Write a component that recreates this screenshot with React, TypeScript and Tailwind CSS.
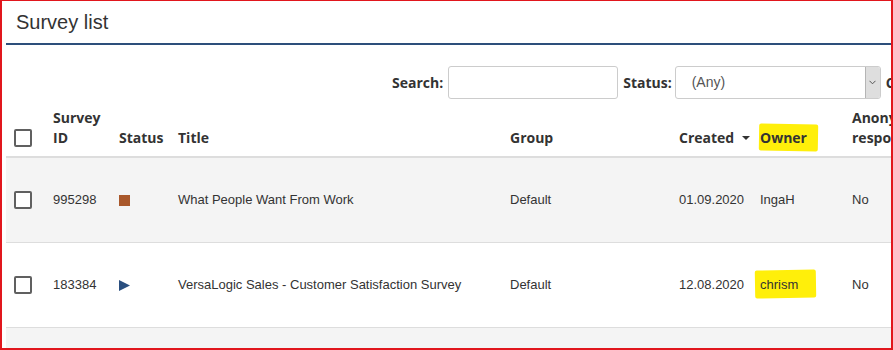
import React from 'react';

type Survey = {
    id: string;
    status: 'stopped' | 'active';
    title: string;
    group: string;
    created: string;
    owner: string;
    anonymized: string;
    marked?: boolean;
};

const surveys: Survey[] = [
    { id: '995298', status: 'stopped', title: 'What People Want From Work', group: 'Default', created: '01.09.2020', owner: 'IngaH', anonymized: 'No' },
    { id: '183384', status: 'active', title: 'VersaLogic Sales - Customer Satisfaction Survey', group: 'Default', created: '12.08.2020', owner: 'chrism', anonymized: 'No', marked: true },
];

const cols = 'grid grid-cols-[47px_66px_59px_332px_169px_81px_92px_160px]';

function Checkbox() {
    return <span className="block w-[18px] h-[18px] border-2 border-[#606060] rounded-[2px] bg-white" />;
}

function Marker({ children, wide }: { children: React.ReactNode; wide?: boolean }) {
    return (
        <span className="relative inline-block">
            <span
                className={
                    wide
                        ? 'absolute -top-[5px] -bottom-[3px] -left-[5px] -right-[18px] bg-[#ffef0a] rounded-[2px] -rotate-1'
                        : 'absolute -top-[4px] -bottom-[3px] -left-[1px] -right-[11px] bg-[#ffef0a] rounded-[2px] rotate-1'
                }
            />
            <span className="relative">{children}</span>
        </span>
    );
}

function StatusIcon({ status }: { status: Survey['status'] }) {
    if (status === 'stopped') {
        return <span className="block w-[11px] h-[11px] bg-[#a9582b]" />;
    }
    return (
        <svg width="11" height="11" viewBox="0 0 11 11">
            <path d="M0 0 L11 5.5 L0 11 Z" fill="#2a4f7f" />
        </svg>
    );
}

export default function App() {
    return (
        <div className="w-[893px] h-[350px] overflow-hidden bg-white border-[#e1161d] border-t border-l-2 border-r-2 border-b-2 text-[#333]">
            <div className="ml-[4px]">
                <div className="h-[44px] flex items-center pl-[10px] border-b-2 border-[#2d4f7b]">
                    <h1 className="text-[20px] text-[#333]" style={{ fontFamily: '"Liberation Sans", Arial, sans-serif' }}>
                        Survey list
                    </h1>
                </div>

                <div
                    className="flex items-center mt-[21px] pl-[386px] whitespace-nowrap text-[14px] font-bold"
                    style={{ fontFamily: '"Open Sans", sans-serif' }}
                >
                    <label className="shrink-0 mr-[5px]">Search:</label>
                    <input className="shrink-0 w-[170px] h-[33px] border border-[#ccc] rounded-[3px] bg-white" />
                    <label className="shrink-0 ml-[5px] mr-[3px]">Status:</label>
                    <div className="shrink-0 w-[206px] h-[33px] border border-[#ccc] rounded-[3px] flex items-stretch overflow-hidden font-normal">
                        <span
                            className="flex-1 flex items-center pl-[16px] text-[#555] text-[14px]"
                            style={{ fontFamily: '"Liberation Sans", Arial, sans-serif' }}
                        >
                            (Any)
                        </span>
                        <span className="w-[15px] bg-[#dedede] border-l border-[#b5b5b5] flex items-center justify-center">
                            <svg width="7" height="5" viewBox="0 0 7 5">
                                <path d="M0.5 0.8 L3.5 3.8 L6.5 0.8" fill="none" stroke="#555" strokeWidth="1" />
                            </svg>
                        </span>
                    </div>
                    <span className="shrink-0 ml-[5px]">Columns</span>
                </div>

                <div
                    className={`${cols} h-[59px] items-end pb-[8px] border-b-2 border-[#ddd] text-[14px] font-bold leading-[20px] whitespace-nowrap`}
                    style={{ fontFamily: '"Open Sans", sans-serif' }}
                >
                    <div className="h-[20px] flex items-center pl-[8px]">
                        <Checkbox />
                    </div>
                    <div>
                        Survey
                        <br />
                        ID
                    </div>
                    <div>Status</div>
                    <div>Title</div>
                    <div>Group</div>
                    <div className="flex items-center">
                        Created
                        <svg className="ml-[8px]" width="8" height="4" viewBox="0 0 8 4">
                            <path d="M0 0 L8 0 L4 4 Z" fill="#333" />
                        </svg>
                    </div>
                    <div>
                        <Marker>Owner</Marker>
                    </div>
                    <div>
                        Anonymized
                        <br />
                        responses
                    </div>
                </div>

                <div className="text-[13px] leading-[20px]" style={{ fontFamily: '"Liberation Sans", Arial, sans-serif' }}>
                    {surveys.map((s, i) => (
                        <div
                            key={s.id}
                            className={`${cols} h-[85px] items-center border-b border-[#ddd] whitespace-nowrap ${i % 2 === 0 ? 'bg-[#f4f4f4]' : 'bg-white'}`}
                        >
                            <div className="pl-[8px]">
                                <Checkbox />
                            </div>
                            <div>{s.id}</div>
                            <div className="flex items-center">
                                <StatusIcon status={s.status} />
                            </div>
                            <div>{s.title}</div>
                            <div>{s.group}</div>
                            <div>{s.created}</div>
                            <div>{s.marked ? <Marker wide>{s.owner}</Marker> : s.owner}</div>
                            <div>{s.anonymized}</div>
                        </div>
                    ))}
                    <div className="h-[30px] bg-[#f4f4f4]" />
                </div>
            </div>
        </div>
    );
}
